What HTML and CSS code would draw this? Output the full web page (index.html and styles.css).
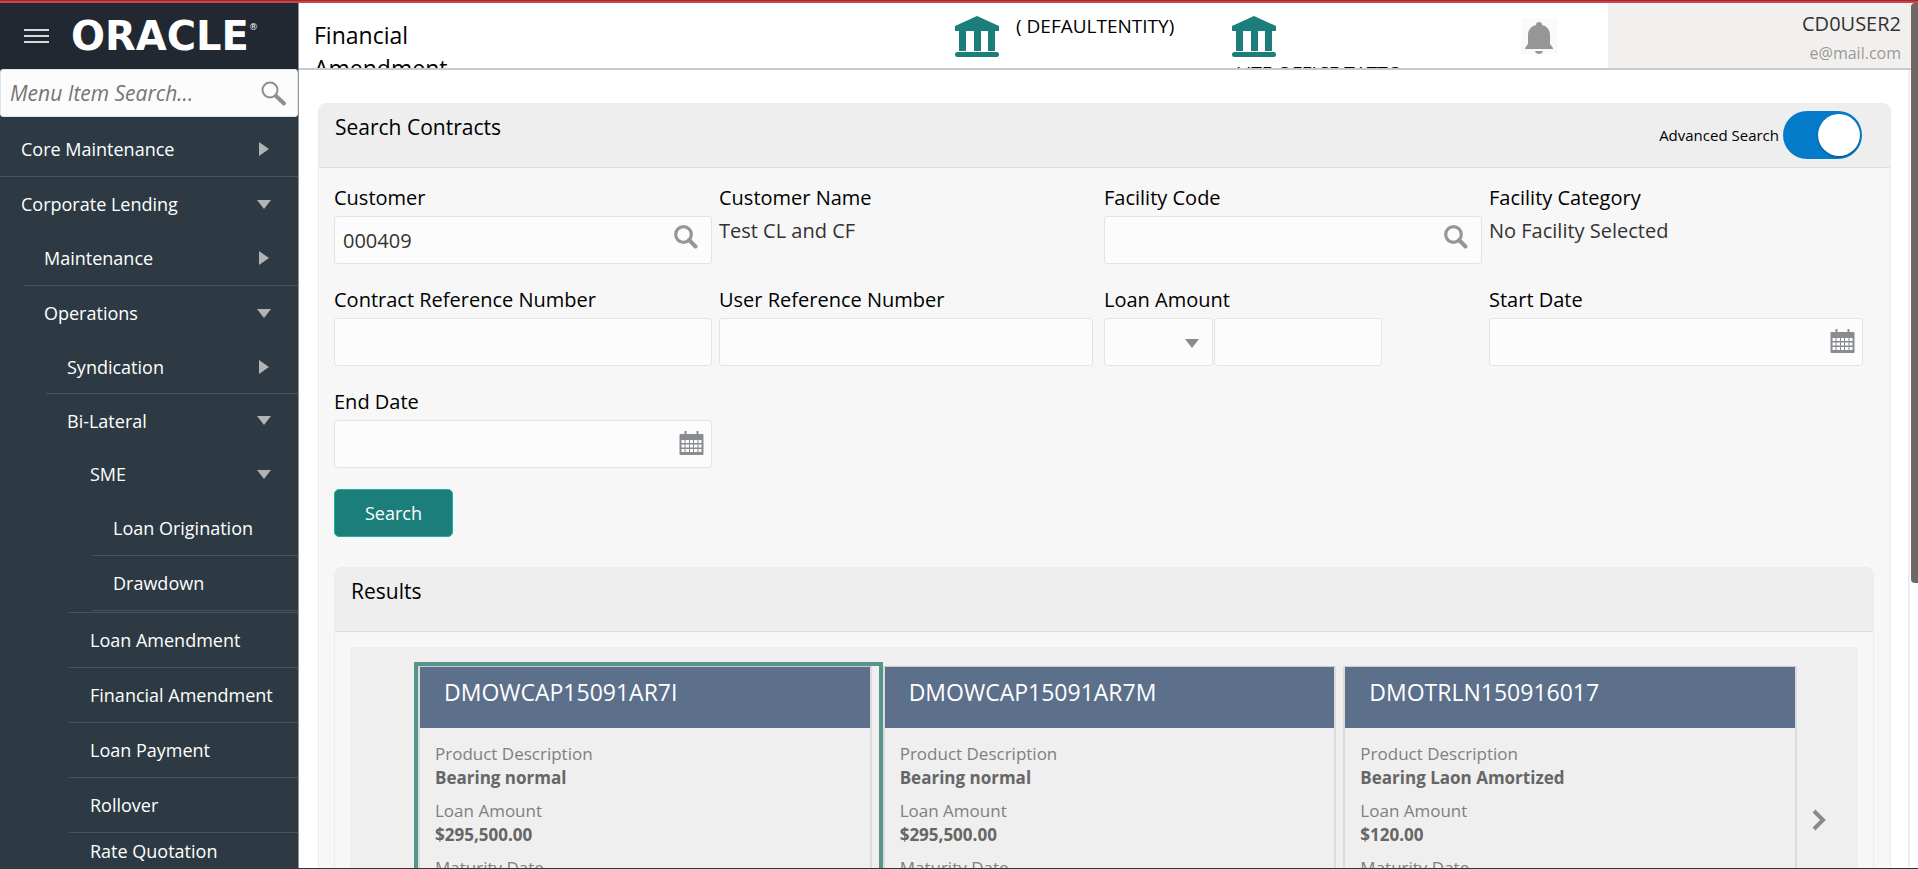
FILE: index.html
```html
<!DOCTYPE html>
<html lang="en">
<head>
    <meta charset="UTF-8">
    <meta name="viewport" content="width=device-width, initial-scale=1.0">
    <title>Financial Amendment</title>
    <link rel="stylesheet" href="styles.css">
</head>
<body>
    <!-- shared icons -->
    <svg class="sprite" aria-hidden="true">
        <symbol id="icon-bank" viewBox="0 0 44 42">
            <path d="M22 0L44 10V15H40V35H33V15H26V35H19V15H11V35H4V15H0V10Z"/>
            <rect x="0" y="36" width="44" height="5" rx="2.5"/>
        </symbol>
        <symbol id="icon-search" viewBox="0 0 24 24">
            <circle cx="9.5" cy="9.5" r="7.8" fill="none" stroke="currentColor" stroke-width="3.2"/>
            <path d="M15 15L21.5 21.5" stroke="currentColor" stroke-width="4" stroke-linecap="round"/>
        </symbol>
        <symbol id="icon-calendar" viewBox="0 0 24 24">
            <path fill-rule="evenodd" d="M1 3H5V0H7V3H17V0H19V3H23Q24 3 24 4V23Q24 24 23 24H1Q0 24 0 23V4Q0 3 1 3Z
                M2 9V12H5V9Z M6 9V12H9.500V9Z M10.500 9V12H13.500V9Z M14.500 9V12H18V9Z M19 9V12H22V9Z
                M2 13.500V16.500H5V13.500Z M6 13.500V16.500H9.500V13.500Z M10.500 13.500V16.500H13.500V13.500Z M14.500 13.500V16.500H18V13.500Z M19 13.500V16.500H22V13.500Z
                M2 18V21H5V18Z M6 18V21H9.500V18Z M10.500 18V21H13.500V18Z M14.500 18V21H18V18Z M19 18V21H22V18Z"/>
        </symbol>
    </svg>

    <div class="top-line"></div>

    <div class="app">
        <nav class="sidebar">
            <div class="brand">
                <button type="button" class="menu-toggle" aria-label="Toggle menu"><span></span><span></span><span></span></button>
                <span class="logo">ORACLE<sup>®</sup></span>
            </div>
            <div class="menu-search">
                <input type="text" placeholder="Menu Item Search..." aria-label="Menu Item Search">
                <svg class="menu-search-icon" viewBox="0 0 26 26">
                    <circle cx="9" cy="9" r="7.500" fill="none" stroke="#8a8f93" stroke-width="2"/>
                    <path d="M15 15L23 22.500" stroke="#8a8f93" stroke-width="4" stroke-linecap="round"/>
                </svg>
            </div>
            <ul class="menu">
                <li class="line"><a href="#">Core Maintenance<i class="arrow right"></i></a></li>
                <li><a href="#">Corporate Lending<i class="arrow down"></i></a>
                    <ul>
                        <li class="line"><a href="#">Maintenance<i class="arrow right"></i></a></li>
                        <li><a href="#">Operations<i class="arrow down"></i></a>
                            <ul>
                                <li class="line"><a href="#" class="short">Syndication<i class="arrow right"></i></a></li>
                                <li><a href="#" class="short">Bi-Lateral<i class="arrow down"></i></a>
                                    <ul>
                                        <li class="line group"><a href="#">SME<i class="arrow down"></i></a>
                                            <ul>
                                                <li class="line"><a href="#">Loan Origination</a></li>
                                                <li class="line"><a href="#">Drawdown</a></li>
                                            </ul>
                                        </li>
                                        <li class="line"><a href="#">Loan Amendment</a></li>
                                        <li class="line"><a href="#">Financial Amendment</a></li>
                                        <li class="line"><a href="#">Loan Payment</a></li>
                                        <li class="line"><a href="#">Rollover</a></li>
                                        <li><a href="#" class="compact">Rate Quotation</a></li>
                                    </ul>
                                </li>
                            </ul>
                        </li>
                    </ul>
                </li>
            </ul>
        </nav>

        <div class="page">
            <header class="header">
                <h1>Financial Amendment</h1>
                <div class="entity">
                    <svg class="bank"><use href="#icon-bank"/></svg>
                    <span>( DEFAULTENTITY)</span>
                </div>
                <div class="branch">
                    <svg class="bank"><use href="#icon-bank"/></svg>
                    <span>LITE OFFICE TATTO.</span>
                </div>
                <button type="button" class="bell" aria-label="Notifications">
                    <svg viewBox="0 0 28 32">
                        <path d="M14 0C16 0 17 1 17 3C22 4 25 8 25 13V22L28 26V27H0V26L3 22V13C3 8 6 4 11 3C11 1 12 0 14 0Z"/>
                        <path d="M10 29H18C17 33 11 33 10 29Z"/>
                    </svg>
                </button>
                <div class="user">
                    <div class="user-name">CD0USER2</div>
                    <div class="user-mail">e@mail.com</div>
                </div>
            </header>

            <main class="content">
                <section class="panel">
                    <div class="panel-header">
                        <h2>Search Contracts</h2>
                        <label class="switch">
                            <span>Advanced Search</span>
                            <input type="checkbox" checked>
                        </label>
                    </div>
                    <form class="panel-body">
                        <div class="fields">
                            <div class="field">
                                <label for="customer">Customer</label>
                                <div class="control">
                                    <input type="text" id="customer" value="000409">
                                    <svg class="lov"><use href="#icon-search"/></svg>
                                </div>
                            </div>
                            <div class="field">
                                <label for="customer-name">Customer Name</label>
                                <output id="customer-name">Test CL and CF</output>
                            </div>
                            <div class="field">
                                <label for="facility">Facility Code</label>
                                <div class="control">
                                    <input type="text" id="facility">
                                    <svg class="lov"><use href="#icon-search"/></svg>
                                </div>
                            </div>
                            <div class="field">
                                <label for="category">Facility Category</label>
                                <output id="category">No Facility Selected</output>
                            </div>
                            <div class="field">
                                <label for="contract-ref">Contract Reference Number</label>
                                <input type="text" id="contract-ref">
                            </div>
                            <div class="field">
                                <label for="user-ref">User Reference Number</label>
                                <input type="text" id="user-ref">
                            </div>
                            <div class="field">
                                <label for="amount">Loan Amount</label>
                                <div class="amount">
                                    <div class="currency">
                                        <select aria-label="Currency"><option></option></select>
                                        <i class="arrow down"></i>
                                    </div>
                                    <input type="text" id="amount">
                                </div>
                            </div>
                            <div class="field">
                                <label for="start-date">Start Date</label>
                                <div class="control">
                                    <input type="text" id="start-date">
                                    <svg class="calendar"><use href="#icon-calendar"/></svg>
                                </div>
                            </div>
                            <div class="field">
                                <label for="end-date">End Date</label>
                                <div class="control">
                                    <input type="text" id="end-date">
                                    <svg class="calendar"><use href="#icon-calendar"/></svg>
                                </div>
                            </div>
                        </div>
                        <button type="button" class="btn">Search</button>

                        <section class="panel results">
                            <div class="panel-header">
                                <h2>Results</h2>
                            </div>
                            <div class="carousel">
                                <div class="cards">
                                    <article class="card-item selected">
                                        <div class="card">
                                            <h3>DMOWCAP15091AR7I</h3>
                                            <dl>
                                                <dt>Product Description</dt>
                                                <dd>Bearing normal</dd>
                                                <dt>Loan Amount</dt>
                                                <dd>$295,500.00</dd>
                                                <dt>Maturity Date</dt>
                                            </dl>
                                        </div>
                                    </article>
                                    <article class="card-item">
                                        <div class="card">
                                            <h3>DMOWCAP15091AR7M</h3>
                                            <dl>
                                                <dt>Product Description</dt>
                                                <dd>Bearing normal</dd>
                                                <dt>Loan Amount</dt>
                                                <dd>$295,500.00</dd>
                                                <dt>Maturity Date</dt>
                                            </dl>
                                        </div>
                                    </article>
                                    <article class="card-item">
                                        <div class="card">
                                            <h3>DMOTRLN150916017</h3>
                                            <dl>
                                                <dt>Product Description</dt>
                                                <dd>Bearing Laon Amortized</dd>
                                                <dt>Loan Amount</dt>
                                                <dd>$120.00</dd>
                                                <dt>Maturity Date</dt>
                                            </dl>
                                        </div>
                                    </article>
                                </div>
                                <button type="button" class="next" aria-label="Next">
                                    <svg viewBox="0 0 16 22"><path d="M3 2L12 11L3 20" fill="none" stroke="#888b8d" stroke-width="4"/></svg>
                                </button>
                            </div>
                        </section>
                    </form>
                </section>
            </main>
        </div>
        <div class="scrollbar"><div class="thumb"></div></div>
    </div>
    <div class="bottom-line"></div>
</body>
</html>
```
FILE: styles.css
```css
* {
    box-sizing: border-box;
}
body {
    margin: 0;
    height: 100vh;
    display: flex;
    flex-direction: column;
    overflow: hidden;
    background: #fff;
    color: #000;
    font-family: "Open Sans", "Noto Sans", sans-serif;
    font-size: 20px;
}
h1, h2, h3, ul, dl, dd {
    margin: 0;
    padding: 0;
    font-weight: normal;
}
button, input, select {
    font-family: inherit;
}
.sprite {
    display: none;
}
.top-line {
    flex: none;
    height: 3px;
    background: #b32025;
    border-bottom: 2px solid #c04a4c;
}
.bottom-line {
    flex: none;
    height: 1px;
    background: #333438;
}
.app {
    flex: 1;
    min-height: 0;
    display: flex;
}

/* sidebar */
.sidebar {
    flex: none;
    width: 299px;
    overflow: hidden;
    background: #2d3a43;
    border-right: 1px solid #8d9396;
}
.brand {
    height: 66px;
    display: flex;
    align-items: center;
    padding-left: 24px;
    background: #222831;
}
.menu-toggle {
    width: 25px;
    padding: 0;
    border: none;
    background: none;
}
.menu-toggle span {
    display: block;
    height: 2px;
    margin: 4px 0;
    background: #d8d8d8;
}
.logo {
    margin-left: 22px;
    display: flex;
    color: #fff;
    font-family: "DejaVu Sans", sans-serif;
    font-size: 40px;
    font-weight: bold;
    line-height: 44px;
}
.logo sup {
    font-size: 9px;
    font-weight: normal;
    line-height: 26px;
}
.menu-search {
    position: relative;
}
.menu-search input {
    display: block;
    width: 100%;
    height: 48px;
    padding: 0 60px 0 9px;
    border: 1px solid #dfe4e7;
    border-radius: 3px;
    background: #fcfcfc;
    font-size: 21px;
    font-style: italic;
}
.menu-search input::placeholder {
    color: #757575;
}
.menu-search-icon {
    position: absolute;
    top: 12px;
    right: 11px;
    width: 26px;
    height: 26px;
}
.menu {
    padding-top: 5px;
}
.menu, .menu ul {
    list-style: none;
}
.menu ul {
    margin-left: 23px;
}
.menu .line {
    border-bottom: 1px solid #46545e;
}
.menu .group {
    padding-bottom: 1px;
}
.menu a {
    display: flex;
    align-items: center;
    justify-content: space-between;
    height: 54px;
    padding: 0 27px 0 21px;
    color: #fff;
    font-size: 18px;
    text-decoration: none;
    white-space: nowrap;
}
.menu a.short {
    height: 53px;
}
.menu a.compact {
    height: 36px;
}
.arrow.right {
    margin-right: 2px;
    border-left: 10px solid #b1b3b5;
    border-top: 7px solid transparent;
    border-bottom: 7px solid transparent;
}
.arrow.down {
    border-top: 9px solid #b1b3b5;
    border-left: 7px solid transparent;
    border-right: 7px solid transparent;
}

/* header */
.page {
    flex: 1;
    min-width: 0;
    display: flex;
    flex-direction: column;
}
.header {
    flex: none;
    height: 67px;
    display: flex;
    overflow: hidden;
    border-bottom: 2px solid #cacaca;
}
.header h1 {
    width: 180px;
    padding: 16px 0 0 15px;
    font-size: 23px;
    line-height: 33px;
}
.entity, .branch {
    flex: none;
    display: flex;
    padding-top: 13px;
    font-size: 19px;
    line-height: 20px;
    white-space: nowrap;
}
.entity {
    width: 277px;
    margin-left: auto;
    gap: 17px;
}
.branch {
    width: 289px;
    flex-wrap: wrap;
    gap: 5px;
}
.bank {
    flex: none;
    width: 44px;
    height: 42px;
    fill: #1c7e7a;
}
.branch span {
    width: 100%;
    padding-left: 4px;
}
.bell {
    align-self: flex-start;
    width: 36px;
    height: 36px;
    margin: 15px 51px 0 0;
    padding: 3px 4px 0;
    border: none;
    background: #fafafa;
}
.bell svg {
    display: block;
    width: 28px;
    height: 32px;
    fill: #969696;
}
.user {
    flex: none;
    width: 303px;
    padding: 7px 10px 0 0;
    background: #f1f0ee;
    text-align: right;
}
.user-name {
    color: #333;
    font-size: 20px;
    line-height: 28px;
}
.user-mail {
    color: #999;
    font-size: 16px;
    line-height: 30px;
}

/* content */
.content {
    flex: 1;
    min-height: 0;
    overflow: hidden;
    padding: 33px 17px 0 19px;
    border-right: 2px solid #ecefef;
    margin-right: 1px;
}
.panel {
    border: 1px solid #ececec;
    border-radius: 8px 8px 0 0;
    background: #f7f7f7;
}
.panel-header {
    display: flex;
    justify-content: space-between;
    height: 64px;
    padding: 7px 28px 0 16px;
    border-bottom: 1px solid #dcdcdc;
    border-radius: 8px 8px 0 0;
    background: #eee;
}
.panel-header h2 {
    font-size: 21px;
    line-height: 32px;
}
.switch {
    display: flex;
    align-items: center;
    gap: 4px;
    height: 48px;
    font-size: 15px;
}
.switch input {
    appearance: none;
    width: 79px;
    height: 48px;
    margin: 0;
    padding: 3px 2px;
    border-radius: 24px;
    background: #037bc8;
}
.switch input::before {
    content: "";
    display: block;
    width: 42px;
    height: 42px;
    margin-left: auto;
    border-radius: 50%;
    background: #fff;
    box-shadow: 0 1px 2px rgba(0,0,0,0.4);
}
.panel-body {
    padding: 14px 16px 0 15px;
}
.fields {
    display: grid;
    grid-template-columns: repeat(4, 1fr);
}
.field {
    height: 102px;
    padding-right: 7px;
}
.field:nth-child(even) {
    padding-right: 11px;
}
.field label {
    display: block;
    line-height: 32px;
    margin-bottom: 2px;
}
.field output {
    display: block;
    color: #333;
    line-height: 30px;
}
.field input, .field select {
    display: block;
    width: 100%;
    height: 48px;
    padding: 0 8px;
    border: 1px solid #e4e4e4;
    border-radius: 3px;
    background: #fcfcfc;
    color: #333;
    font-size: 20px;
}
.field select {
    appearance: none;
}
.control, .currency {
    position: relative;
}
.lov {
    position: absolute;
    top: 9px;
    right: 14px;
    width: 24px;
    height: 24px;
    color: #969696;
}
.calendar {
    position: absolute;
    top: 11px;
    right: 8px;
    width: 25px;
    height: 24px;
    fill: #888b8f;
}
.amount {
    display: flex;
    gap: 1px;
    width: 278px;
}
.currency {
    flex: none;
    width: 109px;
}
.currency .arrow {
    position: absolute;
    top: 21px;
    right: 14px;
    border-top-color: #888b8f;
}
.btn {
    display: block;
    width: 119px;
    height: 48px;
    margin-top: 1px;
    border: 1px solid #1fb0a0;
    border-radius: 5px;
    background: #1c7e7a;
    color: #fff;
    font-size: 18px;
}

/* results */
.results {
    margin-top: 30px;
}
.carousel {
    display: flex;
    height: 348px;
    margin: 15px 15px 0;
    padding: 15px 0 0 64px;
    background: #efefef;
}
.cards {
    flex: 1;
    display: flex;
}
.card-item {
    flex: 1;
    padding-top: 4px;
}
.card-item.selected {
    flex: 1 1 15px;
    padding: 0 7px 0 0;
    border: 4px solid #55958b;
}
.card-item:nth-child(2) {
    padding-right: 7px;
}
.card {
    height: 100%;
    border: 2px solid #dcdcdc;
    border-top: 1px solid #c8ccce;
}
.card h3 {
    height: 61px;
    padding: 9px 0 0 24px;
    background: #5c6f8b;
    color: #fff;
    font-size: 23px;
    line-height: 32px;
}
.card dl {
    padding: 14px 15px 0;
    font-size: 17px;
    line-height: 24px;
}
.card dt {
    color: #808080;
}
.card dd {
    margin-bottom: 9px;
    color: #666;
    font-weight: bold;
}
.next {
    flex: none;
    width: 61px;
    padding: 0 18px 14px 0;
    border: none;
    background: none;
}
.next svg {
    width: 16px;
    height: 22px;
}
.scrollbar {
    flex: none;
    width: 7px;
}
.thumb {
    height: 67%;
    border-radius: 4px 0 0 4px;
    background: #706666;
}
```
